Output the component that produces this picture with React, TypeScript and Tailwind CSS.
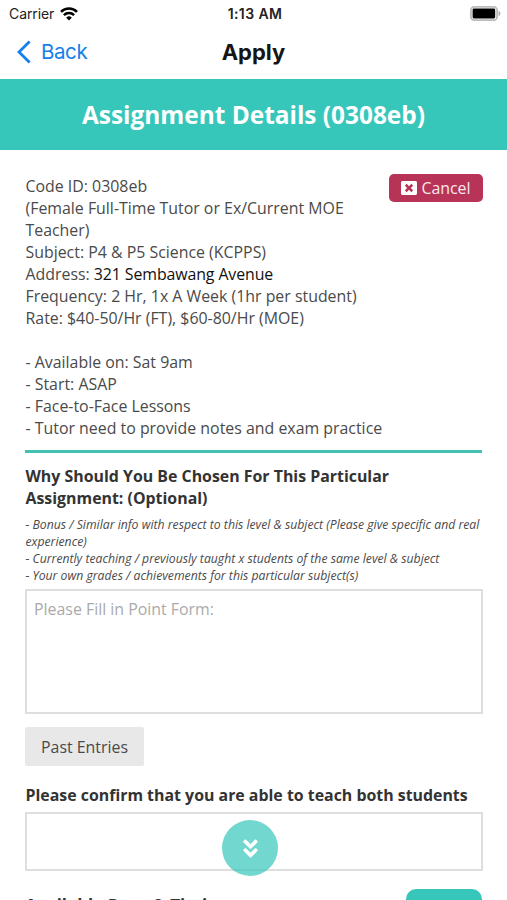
import { FaAngleDoubleDown, FaWindowClose } from 'react-icons/fa'

const details = [
    'Frequency: 2 Hr, 1x A Week (1hr per student)',
    'Rate: $40-50/Hr (FT), $60-80/Hr (MOE)',
]

const requirements = [
    '- Available on: Sat 9am',
    '- Start: ASAP',
    '- Face-to-Face Lessons',
    '- Tutor need to provide notes and exam practice',
]

const hints = [
    '- Bonus / Similar info with respect to this level & subject (Please give specific and real experience)',
    '- Currently teaching / previously taught x students of the same level & subject',
    '- Your own grades / achievements for this particular subject(s)',
]

function StatusBar() {
    return (
        <div className="grid grid-cols-3 items-center h-[26px] pl-[9px] pr-[6px] text-[14px] text-[#222] font-['Inter',sans-serif]">
            <div className="flex items-center gap-[6px] pt-[2px]">
                <span className="tracking-[-0.1px]">Carrier</span>
                <svg viewBox="0 0 18 14" className="w-[18px] h-[14px]" fill="none" stroke="#000" strokeWidth="2.5">
                    <path d="M1 4.9a11.4 11.4 0 0 1 16 0" />
                    <path d="M3.9 8.1a7.2 7.2 0 0 1 10.2 0" />
                    <path d="M9 13.6 6.2 10.7a4 4 0 0 1 5.6 0Z" fill="#000" stroke="none" />
                </svg>
            </div>
            <span className="text-center font-semibold pt-[2px] tracking-[0.4px]">1:13 AM</span>
            <svg viewBox="0 0 31 15" className="w-[31px] h-[15px] justify-self-end">
                <rect x="0.9" y="0.9" width="26.2" height="13.2" rx="3.4" fill="#fff" stroke="#bbb" strokeWidth="1.8" />
                <rect x="2.6" y="2.6" width="22.6" height="9.8" rx="1.4" fill="#000" />
                <path d="M28.6 4.8v5.4c2.4-1 2.4-4.4 0-5.4Z" fill="#aaa" />
            </svg>
        </div>
    )
}

function NavBar() {
    return (
        <div className="grid grid-cols-3 items-center h-[53px] px-[17px] pb-[2px] font-['Inter',sans-serif]">
            <button className="flex items-center gap-[10px] text-[#1680ea] text-[20.5px]">
                <svg viewBox="0 0 14 24" className="w-[14px] h-[24px]" fill="none" stroke="currentColor" strokeWidth="2.8">
                    <path d="M12.6 1.4 2 12l10.6 10.6" />
                </svg>
                <span className="tracking-[-0.4px]">Back</span>
            </button>
            <h1 className="text-center text-[22px] font-bold text-[#151515]">Apply</h1>
        </div>
    )
}

export default function App() {
    return (
        <div className="relative w-full h-[900px] overflow-hidden bg-white text-[#4a4a4a] font-['Open_Sans',sans-serif] text-[15.9px] leading-[22px]">
            <StatusBar />
            <NavBar />

            <div className="flex items-center justify-center h-[71px] bg-[#36c7ba] text-white text-[24.4px] font-bold">
                Assignment Details (0308eb)
            </div>

            <main className="px-[25px] pt-[25px]">
                <div className="flex items-start justify-between">
                    <div className="w-[350px] pl-[0.5px]">
                        <p>Code ID: 0308eb</p>
                        <p>(Female Full-Time Tutor or Ex/Current MOE Teacher)</p>
                        <p>Subject: P4 &amp; P5 Science (KCPPS)</p>
                        <p>Address: <span className="text-[#111] tracking-[-0.1px]">321 Sembawang Avenue</span></p>
                        {details.map(line => <p key={line}>{line}</p>)}
                    </div>
                    <button className="flex items-center justify-center gap-[4px] w-[94px] h-[28px] mt-[-1px] -mr-px rounded-[5px] bg-[#b83358] text-[#fbe9ee]">
                        <FaWindowClose className="w-[16px] h-[16px] text-white" />
                        Cancel
                    </button>
                </div>

                <div className="mt-[22px] pl-[0.5px]">
                    {requirements.map(line => <p key={line}>{line}</p>)}
                </div>

                <hr className="mt-[11px] border-0 h-[3px] bg-[#45c1b3]" />

                <h2 className="mt-[12px] pl-[0.5px] font-bold text-[#333]">
                    Why Should You Be Chosen For This Particular Assignment: (Optional)
                </h2>
                <div className="mt-[7px] pl-[0.5px] -mr-2 text-[12.22px] leading-[17px] italic">
                    {hints.map(line => <p key={line}>{line}</p>)}
                </div>

                <textarea
                    placeholder="Please Fill in Point Form:"
                    className="block w-[458px] h-[125px] mt-[5px] px-[7px] py-[7px] border-2 border-[#dedede] resize-none placeholder:text-[#aaa]"
                />

                <button className="block w-[119px] h-[39px] mt-[13px] rounded-[2px] bg-[#e8e8e9]">Past Entries</button>

                <h2 className="mt-[18px] pl-[0.5px] font-bold text-[#333]">Please confirm that you are able to teach both students</h2>
                <input className="block w-[458px] h-[59px] mt-[6px] px-[7px] border-2 border-[#dedede]" />

                <div className="flex items-start justify-between mt-[18px]">
                    <h2 className="mt-[6px] text-[17px] font-bold text-[#333]">Available Days &amp; Timings:</h2>
                    <button aria-label="Add timing" className="w-[76px] h-[38px] rounded-[10px] bg-[#36c7ba]" />
                </div>
            </main>

            <button className="absolute left-[222px] top-[820px] flex items-center justify-center w-[56px] h-[56px] rounded-full bg-[#36c7ba]/70 text-white">
                <FaAngleDoubleDown className="w-[23px] h-[23px]" />
            </button>
        </div>
    )
}
